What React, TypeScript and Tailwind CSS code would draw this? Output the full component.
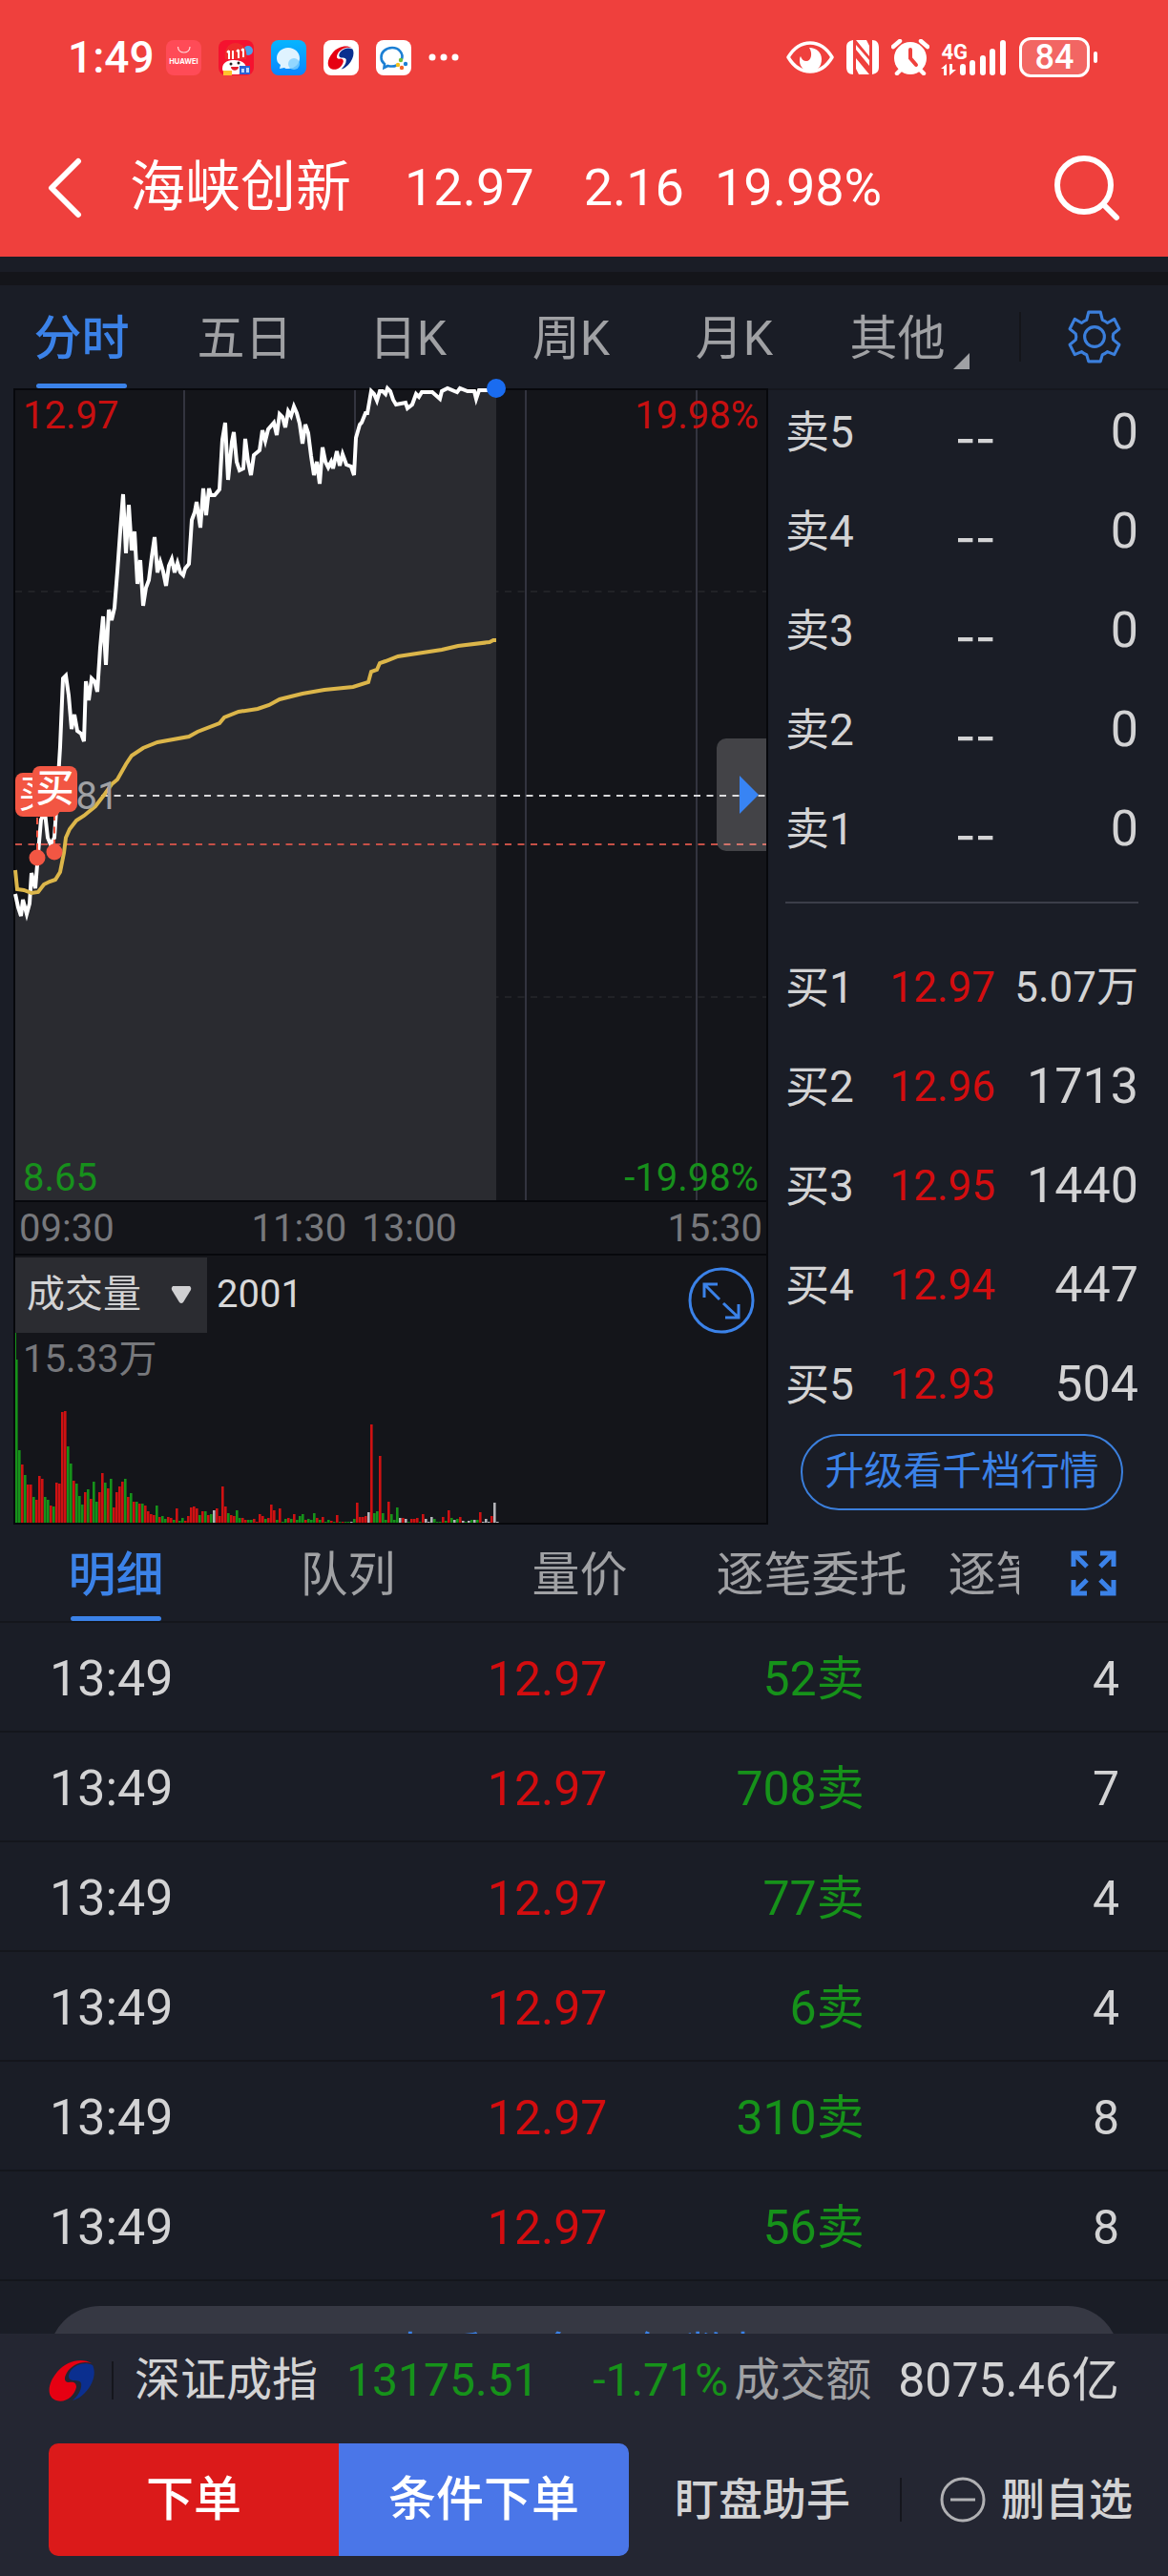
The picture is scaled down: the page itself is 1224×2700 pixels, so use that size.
import { useState } from "react";

const tabs = ["分时", "五日", "日K", "周K", "月K", "其他"];
const detailTabs = ["明细", "队列", "量价", "逐笔委托", "逐笔成交"];

const sells = [
  ["卖5", "--", "0"],
  ["卖4", "--", "0"],
  ["卖3", "--", "0"],
  ["卖2", "--", "0"],
  ["卖1", "--", "0"],
];

const buys = [
  ["买1", "12.97", "5.07万"],
  ["买2", "12.96", "1713"],
  ["买3", "12.95", "1440"],
  ["买4", "12.94", "447"],
  ["买5", "12.93", "504"],
];

const trades = [
  ["13:49", "12.97", "52卖", "4"],
  ["13:49", "12.97", "708卖", "7"],
  ["13:49", "12.97", "77卖", "4"],
  ["13:49", "12.97", "6卖", "4"],
  ["13:49", "12.97", "310卖", "8"],
  ["13:49", "12.97", "56卖", "8"],
];

const priceLine =
  "0,528 3,542 6,551 8,534 12,549 15,538 17,506 21,522 24,485 27,450 31,442 34,469 37,476 41,469 44,423 47,374 50,302 53,299 56,320 59,355 62,340 65,357 69,360 72,368 74,305 77,325 80,302 83,305 86,316 89,270 92,237 95,288 98,230 101,241 104,228 107,190 110,148 113,109 116,171 119,120 122,168 125,148 128,203 131,178 134,226 137,207 140,199 143,175 146,154 149,191 152,180 155,190 158,205 161,184 164,177 167,191 170,181 173,191 176,194 178,187 182,182 185,136 188,128 190,117 194,144 197,103 200,131 203,103 205,110 209,110 214,104 217,52 220,34 223,94 227,54 229,44 232,75 235,84 239,82 241,51 244,75 247,89 250,68 256,63 259,42 262,53 265,41 271,34 274,47 277,25 280,28 283,39 286,22 289,27 292,17 295,24 298,35 301,56 304,36 307,45 310,69 313,89 316,75 319,98 322,60 325,75 328,81 331,75 333,82 337,64 340,79 343,67 347,78 352,80 355,89 357,50 361,36 363,34 367,24 369,24 373,1 376,4 379,11 382,1 385,1 388,4 390,-2 393,1 396,10 399,15 409,13 411,19 416,15 420,4 423,7 426,2 437,2 445,9 447,1 453,-2 463,2 466,-2 474,1 481,1 483,9 486,0 504,0";

const avgLine =
  "0,503 2,523 9,524 17,527 24,526 30,518 36,515 42,513 47,505 51,485 53,469 57,460 64,451 72,446 84,436 94,423 101,413 107,408 116,392 122,383 134,375 149,369 182,363 191,358 214,349 219,343 234,337 254,334 266,330 277,324 301,318 324,314 354,311 370,306 373,295 379,293 382,286 388,284 401,279 447,272 464,268 497,264 501,262 504,262";

// one entry per minute: r = up, g = down, w = flat, then the bar height
const volumes =
  "g171 g76 r61 g50 r40 r40 g27 r24 r49 r46 g27 g24 r18 g17 r42 r41 r116 r117 g80 g62 r44 g41 g28 g19 r32 g35 r25 g43 g22 r32 r52 g42 r36 g46 r16 r32 r38 r43 g46 r27 g31 r22 g22 r20 g20 r18 r12 r9 r8 g18 r6 g7 g4 r6 r5 g3 r15 g2 g5 r2 r7 r16 r17 r15 g8 r12 g12 r8 g9 w13 r15 r7 r38 r17 g10 r8 r7 g13 g5 r5 r3 g3 g3 r4 r1 r9 r7 g4 r5 r19 r13 g3 r15 g1 g4 r5 g4 r9 g3 g7 g9 r3 g4 g3 g10 r5 g3 r6 g1 g3 r2 g1 r8 g1 r1 g1 g1 w1 g4 r21 r6 r6 r7 w11 r103 g10 g12 r70 g10 g3 r22 g9 g3 g16 w5 r5 w4 g1 r4 r4 r5 g1 r9 w4 w1 w6 g4 g1 g1 r6 g2 r13 g5 w3 g4 r6 w2 g1 w2 g3 w3 g3 r11 w1 w4 w1 r7 w21 w1"
    .split(" ")
    .map((v) => ({ color: v[0], h: Number(v.slice(1)) }));

const barColors: Record<string, string> = { r: "#cf1112", g: "#16921a", w: "#b4b4b8" };

function SwirlLogo({ className }: { className?: string }) {
  return (
    <svg viewBox="0 0 48 44" className={className} aria-hidden="true">
      <path d="M45 4C35-2 19 1 9 13-1 25-3 39 8 43c9 3 19-4 21-14 0-5-3-6-8-5-5 0-5-5-2-10C24 6 34 1 45 4z" fill="#e60012" />
      <path d="M46 6c4 8 1 20-8 29-5 5-9 7-13 8 6-5 10-12 9-18-1-3-5-3-9-3-5-1-5-5-2-10 5-7 15-10 23-6z" fill="#0b2f8f" />
    </svg>
  );
}

function StatusBar() {
  return (
    <div className="flex h-[120px] items-center pl-[71px] pr-[74px]">
      <span className="text-[46px] font-medium">1:49</span>
      <div className="ml-3 flex flex-1 items-center gap-[18px]">
        <svg viewBox="0 0 37 37" className="size-[37px]">
          <rect width="37" height="37" rx="8" fill="#ff4b57" />
          <path d="M12.500 7c0 8 12.500 8 12.500 0" fill="none" stroke="#ffd9d9" strokeWidth="1.200" />
          <text x="18.500" y="25" fontSize="7.500" fontWeight="700" textAnchor="middle" fill="#fff" fontFamily="Inter, sans-serif">HUAWEI</text>
        </svg>
        <svg viewBox="0 0 37 37" className="size-[37px]">
          <rect width="37" height="37" rx="8" fill="#f5122f" />
          <circle cx="31" cy="11" r="5" fill="#4aa0e8" />
          <path d="M7 20C5 8 12 3 18 3s13 5 11 17z" fill="#ee2b2b" />
          <path d="M11 11v9M15 11v9M21 10v9M26 9v9M9 13l2-2M19 12l2-2M24 11l2-2" stroke="#fff" strokeWidth="2" />
          <path d="M4 30c0-8 8-9 12-9s13 1 13 9c0 4-5 6-12 6S4 34 4 30z" fill="#fff" />
          <circle cx="13" cy="25" r="1.500" fill="#222" />
          <circle cx="21" cy="24" r="1.500" fill="#222" />
          <path d="M13 28h8c0 5-8 5-8 0z" fill="#e3202d" />
          <rect x="5" y="32" width="9" height="5" fill="#ffc22e" />
          <rect x="22" y="27" width="11" height="9" fill="#2a63d6" />
          <path d="M24 30h3v4h-3zM29 29h3v5h-3z" fill="#bcd8ff" />
        </svg>
        <svg viewBox="0 0 37 37" className="size-[37px]">
          <defs>
            <linearGradient id="msg" x1="0" y1="0" x2="0" y2="1">
              <stop offset="0" stopColor="#06b6ff" />
              <stop offset="1" stopColor="#0a84ff" />
            </linearGradient>
          </defs>
          <rect width="37" height="37" rx="8" fill="url(#msg)" />
          <path d="M18 8c7 0 12 5 12 11s-5 11-12 11c-2 0-3 0-4-1l-5 1 1-4c-3-2-4-4-4-7C6 13 11 8 18 8z" fill="#dff3ff" />
          <circle cx="24" cy="25" r="6" fill="#7fd0ff" opacity=".8" />
        </svg>
        <span className="flex size-[37px] items-center justify-center rounded-lg bg-white">
          <SwirlLogo className="h-[25px] w-7" />
        </span>
        <svg viewBox="0 0 37 37" className="size-[37px]">
          <rect width="37" height="37" rx="8" fill="#fff" />
          <path d="M27 20c2-6-3-12-10-12S5 13 5.500 18.500c0 3 1.500 5 3.500 6.500l-.5 4 4-2c4 1 7 .5 9-.5" fill="none" stroke="#1b7fd4" strokeWidth="2.600" />
          <circle cx="26" cy="21" r="2.200" fill="#6cbf3a" />
          <circle cx="31" cy="25" r="2.200" fill="#1b7fd4" />
          <circle cx="27" cy="29" r="2.200" fill="#f2652a" />
          <circle cx="23" cy="26" r="2.200" fill="#f7c21b" />
        </svg>
        <svg viewBox="0 0 32 8" className="h-2 w-8">
          <circle cx="4" cy="4" r="3.500" fill="#fff" />
          <circle cx="16" cy="4" r="3.500" fill="#fff" />
          <circle cx="28" cy="4" r="3.500" fill="#fff" />
        </svg>
      </div>
      <div className="flex items-center gap-3">
        <svg viewBox="0 0 50 36" className="h-9 w-[50px]">
          <path d="M2 18C8 8 16 3 25 3s17 5 23 15c-6 10-14 15-23 15S8 28 2 18z" fill="none" stroke="#fff" strokeWidth="3.500" strokeLinejoin="round" />
          <path d="M24 8c8 0 13 5 13 12 0 8-5 13-12 13-6 0-11-5-11-11 0-2 0-4 1-5 1 3 3 5 6 5 5 0 7-8 3-14z" fill="#fff" />
        </svg>
        <svg viewBox="0 0 36 38" className="h-[38px] w-9">
          <path d="M8 1C3 2 1 4 1 9v20c0 5 2 8 7 8V1zM11 1l14 17V7l-3-6zM28 37c5-1 7-3 7-8V9c0-5-2-8-7-8v36zM25 37L11 20v11l3 6zM11 11l14 17v-6L11 6z" fill="#fff" />
        </svg>
        <svg viewBox="0 0 40 38" className="h-[38px] w-10">
          <circle cx="20" cy="20" r="17" fill="#fff" />
          <path d="M2 8l7-6M38 8l-7-6M10 32l-4 4M30 32l4 4" stroke="#fff" strokeWidth="4.500" strokeLinecap="round" />
          <path d="M20 11v9l6 7" fill="none" stroke="#ef403d" strokeWidth="4" strokeLinecap="round" />
        </svg>
        <div className="flex items-end">
          <div className="flex flex-col items-start">
            <span className="text-[22px] leading-6 font-bold">4G</span>
            <svg viewBox="0 0 18 12" className="h-3 w-[18px]">
              <path d="M0 5l6-5v12H3V5zM9 0h3v6h4l-7 6z" fill="#fff" />
            </svg>
          </div>
          <svg viewBox="0 0 50 38" className="-ml-2 h-[38px] w-[50px]">
            <path d="M3 29v6M13 25v10M24 20v15M34 13v22M45 4v31" stroke="#fff" strokeWidth="6" strokeLinecap="round" />
          </svg>
        </div>
        <div className="flex items-center gap-1">
          <span className="flex h-[42px] w-[74px] items-center justify-center rounded-xl border-3 border-white bg-white/20 text-[36px] font-medium">84</span>
          <span className="h-3 w-1 rounded bg-white" />
        </div>
      </div>
    </div>
  );
}

function Book({ rows, className }: { rows: string[][]; className?: string }) {
  return (
    <table className={"w-full table-fixed text-[#d3d3d4] " + (className ?? "")}>
      <tbody>
        {rows.map(([label, price, vol]) => (
          <tr key={label} className="h-[104px]">
            <th scope="row" className="w-[100px] p-0 text-left text-[46px] leading-none font-normal">{label}</th>
            <td className={price === "--" ? "w-[120px] p-0 text-right font-['Noto_Sans_CJK_SC'] text-[60px] leading-none" : "w-[120px] p-0 text-right text-[44px] leading-none text-[#d30d0f]"}>{price}</td>
            <td className={vol.endsWith("万") ? "p-0 text-right text-[44px] leading-none whitespace-nowrap" : "p-0 text-right text-[52px] leading-none"}>{vol}</td>
          </tr>
        ))}
      </tbody>
    </table>
  );
}

function PriceChart() {
  return (
    <div className="relative h-[853px] border-2 border-[#07080c] bg-[#14151a]">
      <svg viewBox="0 0 787 849" preserveAspectRatio="none" className="block size-full overflow-visible">
        <path d="M177 0v849M356 0v849M535 0v849M714 0v849" stroke="#33343f" strokeWidth="2" />
        <path d="M0 211h787M0 636h787" stroke="#212226" strokeWidth="2" strokeDasharray="7 6.500" />
        <polygon points={priceLine + " 504,849 0,849"} fill="#2a2b30" />
        <path d="M90 425h697" stroke="#d8d8da" strokeWidth="2" strokeDasharray="7 6.500" />
        <path d="M0 476h787" stroke="#c65047" strokeWidth="2" strokeDasharray="7 6.500" />
        <polyline points={priceLine} fill="none" stroke="#fff" strokeWidth="4" />
        <polyline points={avgLine} fill="none" stroke="#dcb64a" strokeWidth="4" />
        <path d="M23 448v40M41 444v40" stroke="#f25643" strokeWidth="2" strokeDasharray="7 6.500" />
        <circle cx="23" cy="490" r="8.500" fill="#f25643" />
        <circle cx="41" cy="484" r="8.500" fill="#f25643" />
        <circle cx="504" cy="-2" r="10" fill="#1a6cf0" />
      </svg>
      <span className="absolute top-1 left-2 text-[40px] leading-[46px] text-[#c70f10]">12.97</span>
      <span className="absolute top-1 right-2 text-[40px] leading-[46px] text-[#c70f10]">19.98%</span>
      <span className="absolute bottom-0 left-2 text-[40px] leading-[46px] text-[#17901c]">8.65</span>
      <span className="absolute right-2 bottom-0 text-[40px] leading-[46px] text-[#17901c]">-19.98%</span>
      <span className="absolute top-[403px] left-2 text-[40px] leading-[46px] text-[#a0a1a4]">10.81</span>
      <span className="absolute top-[401px] left-0 h-[46px] w-[47px] overflow-hidden rounded-lg bg-[#f25643] text-center text-[40px] leading-[46px] text-white">买</span>
      <span className="absolute top-[394px] left-[18px] h-12 w-[47px] rounded-lg bg-[#f25643] text-center text-[40px] leading-[48px] font-medium text-white">买</span>
      <button type="button" aria-label="展开" className="absolute top-[365px] right-0 flex h-[118px] w-[52px] items-center justify-end rounded-l-[10px] bg-white/20 pr-2">
        <svg viewBox="0 0 20 40" className="h-10 w-5">
          <path d="M0 0l20 20L0 40z" fill="#3884f4" />
        </svg>
      </button>
    </div>
  );
}

function VolumeChart() {
  return (
    <div className="relative h-[284px] border-2 border-[#07080c] bg-[#14151a]">
      <svg viewBox="0 0 787 280" preserveAspectRatio="none" className="absolute inset-0 size-full">
        <rect x="0" y="79" width="1" height="201" fill="#16921a" />
        {volumes.map((v, i) => (
          <rect key={i} x={i * 3} y={280 - v.h} width="2.600" height={v.h} fill={barColors[v.color]} />
        ))}
      </svg>
      <div className="relative flex justify-between">
        <div className="flex items-center">
          <button type="button" className="flex h-[79px] w-[201px] items-center justify-between bg-[#2b2c31] pr-4 pl-3 text-[40px] text-[#d3d3d4]">
            成交量
            <svg viewBox="0 0 22 20" className="h-5 w-[22px]">
              <path d="M2 1h18q2 2 1 4l-8 13q-2 2-4 0L1 5q-1-2 1-4z" fill="#d0d0d2" />
            </svg>
          </button>
          <span className="ml-2.5 text-[40px] text-[#d8d8d9]">2001</span>
        </div>
        <button type="button" aria-label="放大" className="mt-3 mr-3">
          <svg viewBox="0 0 70 70" className="size-[70px]" fill="none" stroke="#3b82e8" strokeWidth="3">
            <circle cx="35" cy="35" r="33" />
            <path d="M17 32V18h14M18 19l15 15M39 53h14V39M52 52L37 38" />
          </svg>
        </button>
      </div>
      <span className="absolute top-[86px] left-2 text-[40px] leading-[46px] text-[#77787c]">15.33万</span>
    </div>
  );
}

export default function App() {
  const [tab, setTab] = useState("分时");
  const [detail, setDetail] = useState("明细");

  return (
    <div className="flex h-screen flex-col overflow-hidden bg-[#1a1d26] font-[Roboto,'Noto_Sans_CJK_SC',sans-serif]">
      <header className="shrink-0 bg-[#ef403d] text-white">
        <StatusBar />
        <div className="flex h-[149px] items-center px-[50px] pt-1">
          <button type="button" aria-label="返回">
            <svg viewBox="0 0 36 64" className="h-16 w-9" fill="none" stroke="#fff" strokeWidth="6" strokeLinecap="round" strokeLinejoin="round">
              <path d="M32 4L4 32l28 28" />
            </svg>
          </button>
          <h1 className="ml-[50px] text-[58px]">海峡创新</h1>
          <span className="ml-14 text-[54px]">12.97</span>
          <span className="ml-[52px] text-[54px]">2.16</span>
          <span className="ml-8 text-[54px]">19.98%</span>
          <button type="button" aria-label="搜索" className="ml-auto">
            <svg viewBox="0 0 70 70" className="size-[70px]" fill="none" stroke="#fff" strokeWidth="6" strokeLinecap="round">
              <circle cx="32" cy="32" r="28" />
              <path d="M53 53l13 13" />
            </svg>
          </button>
        </div>
      </header>

      <main className="min-h-0 flex-1 overflow-hidden">
        <div className="mt-4 h-3.5 bg-[#14151a]" />
        <nav className="flex h-[108px] items-center">
          <div className="flex h-full flex-1 pr-[42px]">
            {tabs.map((t) => (
              <button
                key={t}
                type="button"
                onClick={() => setTab(t)}
                className={"relative flex h-full flex-1 items-center justify-center pt-1 text-[50px] leading-none " + (t === tab ? "font-medium text-[#3b82e8]" : "text-[#a0a1a4]")}
              >
                {t}
                {t === tab && <span className="absolute bottom-0 h-[5px] w-[95px] rounded-full bg-[#3b82e8]" />}
                {t === "其他" && (
                  <svg viewBox="0 0 17 17" className="absolute right-2.5 bottom-5 size-[17px]">
                    <path d="M17 0v17H0z" fill="#a0a1a4" />
                  </svg>
                )}
              </button>
            ))}
          </div>
          <div className="flex h-[52px] w-[156px] items-center justify-center border-l-2 border-[#14151a]">
            <button type="button" aria-label="设置">
              <svg viewBox="0 0 54 54" className="size-[56px]" fill="none" stroke="#3b7fdc" strokeWidth="3" strokeLinejoin="round">
                <path d="M21 2h12l2 8q3 1 5 3l7-4 5 10-6 5q-1 3 0 6l6 5-5 10-7-3q-2 2-5 3l-2 7H21l-2-7q-3-1-5-3l-7 3-5-10 6-5q1-3 0-6l-6-5L7 9l7 4q2-2 5-3z" />
                <circle cx="27" cy="27" r="10" />
              </svg>
            </button>
          </div>
        </nav>

        <div className="flex">
          <div className="ml-3.5 min-w-0 flex-1">
            <PriceChart />
            <div className="flex h-[54px] items-center border-x-2 border-[#07080c] bg-[#14151a] px-1 pt-0.5 text-[40px] text-[#77787c]">
              <span>09:30</span>
              <span className="ml-36">11:30</span>
              <span className="ml-4">13:00</span>
              <span className="ml-auto">15:30</span>
            </div>
            <VolumeChart />
          </div>
          <div className="w-[419px] shrink-0 border-t-2 border-[#15171e] pr-[31px] pl-[18px]">
            <Book rows={sells} className="-mt-2" />
            <hr className="mt-6 border-t-2 border-[#3c3e49]" />
            <Book rows={buys} className="mt-9" />
            <div className="flex justify-center">
              <button type="button" className="h-20 w-[338px] rounded-full border-2 border-[#3b7fdc] text-[41px] text-[#3b82e8]">升级看千档行情</button>
            </div>
          </div>
        </div>

        <nav className="flex h-[103px] border-b-2 border-[#14161c]">
          <div className="flex min-w-0 flex-1 overflow-hidden">
            {detailTabs.map((t) => (
              <button
                key={t}
                type="button"
                onClick={() => setDetail(t)}
                className={"relative flex w-[243px] shrink-0 items-center justify-center pt-1 text-[50px] leading-none " + (t === detail ? "font-medium text-[#3b82e8]" : "text-[#a0a1a4]")}
              >
                {t}
                {t === detail && <span className="absolute bottom-0 h-[5px] w-[95px] rounded-full bg-[#3b82e8]" />}
              </button>
            ))}
          </div>
          <button type="button" aria-label="全屏" className="flex w-[156px] items-center justify-center">
            <svg viewBox="0 0 48 48" className="size-12" fill="none" stroke="#3b82e8" strokeWidth="5">
              <path d="M3 17V3h14M3 3l14 14M31 3h14v14M45 3L31 17M3 31v14h14M3 45l14-14M45 31v14H31M45 45L31 31" />
            </svg>
          </button>
        </nav>

        <div>
          <table className="w-full table-fixed border-separate border-spacing-0 text-[50px] leading-none text-[#d3d3d4]">
            <tbody>
              {trades.map(([time, price, count, n], i) => (
                <tr key={i} className="h-[115px]">
                  <td className="w-[30%] border-b-2 border-[#14161c] p-0 pt-1 pl-[52px] text-[52px]">{time}</td>
                  <td className="w-[22%] border-b-2 border-[#14161c] p-0 pt-1 text-right text-[#d30d0f]">{price}</td>
                  <td className="w-[22%] border-b-2 border-[#14161c] p-0 pt-1 text-right text-[#16921a]">{count}</td>
                  <td className="border-b-2 border-[#14161c] p-0 pt-1 pr-[51px] text-right">{n}</td>
                </tr>
              ))}
            </tbody>
          </table>
          <div className="px-[51px] pt-[26px]">
            <button type="button" className="h-[108px] w-full rounded-full bg-[#363843] text-[52px] text-[#3b82e8]">查看更多明细数据</button>
          </div>
        </div>
      </main>

      <footer className="relative shrink-0 bg-[#242632] px-[51px] pb-[21px]">
        <div className="flex h-[94px] items-center pt-1 text-5xl text-[#d3d3d4]">
          <SwirlLogo className="h-11 w-12" />
          <span className="ml-[18px] h-10 w-0.5 bg-[#15161d]" />
          <span className="ml-[22px]">深证成指</span>
          <span className="ml-[30px] text-[#16921a]">13175.51</span>
          <span className="ml-auto text-[#16921a]">-1.71%</span>
          <span className="ml-1.5 text-[#a0a1a4]">成交额</span>
          <span className="ml-7 text-[50px]">8075.46亿</span>
        </div>
        <div className="mt-[21px] flex h-[118px] items-center text-[46px] text-[#d3d3d4]">
          <button type="button" className="h-full w-[304px] rounded-l-[10px] bg-[#db1a1a] text-[50px] font-medium text-white">下单</button>
          <button type="button" className="h-full w-[304px] rounded-r-[10px] bg-[#4a76e8] text-[50px] font-medium text-white">条件下单</button>
          <button type="button" className="ml-12 font-medium">盯盘助手</button>
          <span className="ml-auto h-[46px] w-0.5 bg-[#15161d]" />
          <button type="button" className="-mr-3.5 ml-10 flex items-center gap-4 font-medium">
            <svg viewBox="0 0 48 48" className="size-12" fill="none" stroke="#b0b0b3" strokeWidth="3">
              <circle cx="24" cy="24" r="22" />
              <path d="M11 24h26" />
            </svg>
            删自选
          </button>
        </div>
      </footer>
    </div>
  );
}
